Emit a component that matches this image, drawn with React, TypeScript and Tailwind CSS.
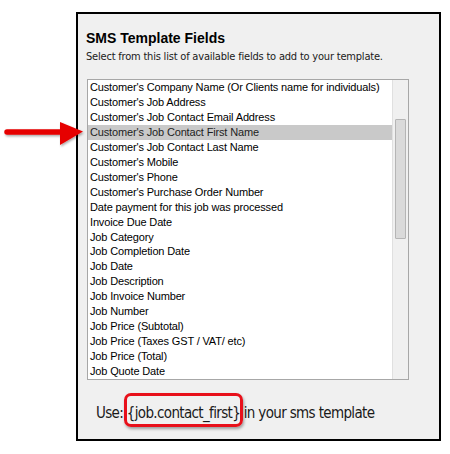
const fields = [
  "Customer's Company Name (Or Clients name for individuals)",
  "Customer's Job Address",
  "Customer's Job Contact Email Address",
  "Customer's Job Contact First Name",
  "Customer's Job Contact Last Name",
  "Customer's Mobile",
  "Customer's Phone",
  "Customer's Purchase Order Number",
  'Date payment for this job was processed',
  'Invoice Due Date',
  'Job Category',
  'Job Completion Date',
  'Job Date',
  'Job Description',
  'Job Invoice Number',
  'Job Number',
  'Job Price (Subtotal)',
  'Job Price (Taxes GST / VAT/ etc)',
  'Job Price (Total)',
  'Job Quote Date',
];

const selected = 3;

function Arrow() {
  return (
    <svg
      className="absolute left-0 top-[118px]"
      width="90"
      height="32"
      viewBox="0 0 90 32"
    >
      <defs>
        <filter id="sh" x="-10%" y="-20%" width="130%" height="160%">
          <feDropShadow dx="1" dy="1.5" stdDeviation="1" floodColor="#000" floodOpacity="0.35" />
        </filter>
      </defs>
      <g filter="url(#sh)">
        <line x1="7" y1="14" x2="62" y2="14" stroke="#e60000" strokeWidth="5.5" strokeLinecap="round" />
        <polygon points="60,4 83,13.5 60,27" fill="#e60000" />
      </g>
    </svg>
  );
}

export default function App() {
  return (
    <div className="relative w-[450px] h-[454px] bg-white overflow-hidden">
      <Arrow />
      <div className="ml-[76px] mt-[12px] w-[365px] h-[429px] border-2 border-black bg-[#f0f0f0] pl-[8px] pt-[15px] font-['Liberation_Sans',Arial,sans-serif]">
        <h3 className="text-[14px] leading-[18px] font-bold text-black">
          SMS Template Fields
        </h3>
        <p className="mt-[3px] text-[11px] leading-[14px] text-[#1a1a1a] font-['DejaVu_Sans_Condensed','DejaVu_Sans',sans-serif] tracking-[-0.2px]">
          Select from this list of available fields to add to your template.
        </p>

        {/* Field list */}
        <div className="mt-[15px] ml-[1px] w-[322px] h-[301px] border border-[#a7a7a7] bg-white flex">
          <div className="flex-1 min-w-0 overflow-hidden flex flex-col">
            {fields.map((f, i) => (
              <div
                key={f}
                className={
                  i === selected
                    ? 'h-[15px] leading-[14px] pl-[2px] text-[11px] tracking-[-0.15px] text-[#1e1e1e] bg-[#c9c9c9] whitespace-nowrap'
                    : 'h-[15px] leading-[14px] pl-[2px] text-[11px] tracking-[-0.15px] text-black whitespace-nowrap'
                }
              >
                {f}
              </div>
            ))}
          </div>
          <div className="w-[16px] shrink-0 bg-[#f0f0f0] border-l border-[#e0e0e0] pt-[39px] px-[2px]">
            <div className="h-[120px] bg-[#dadada] border border-[#b5b5b5] rounded-[1px]" />
          </div>
        </div>

        <div className="mt-[23px] ml-[10px] flex items-center text-[15px] leading-[20px] text-[#1a1a1a] font-['DejaVu_Sans_Condensed','DejaVu_Sans',sans-serif] tracking-[-0.65px]">
          <span>Use:&nbsp;</span>
          <span className="relative">
            {'{job.contact_first}'}
            <span className="absolute -left-[3px] -right-[3px] -top-[10px] -bottom-[4px] rounded-[7px] border-[3px] border-[#e8101a] shadow-[1px_2px_3px_rgba(0,0,0,0.35)]" />
          </span>
          <span>&nbsp;in your sms template</span>
        </div>
      </div>
    </div>
  );
}
